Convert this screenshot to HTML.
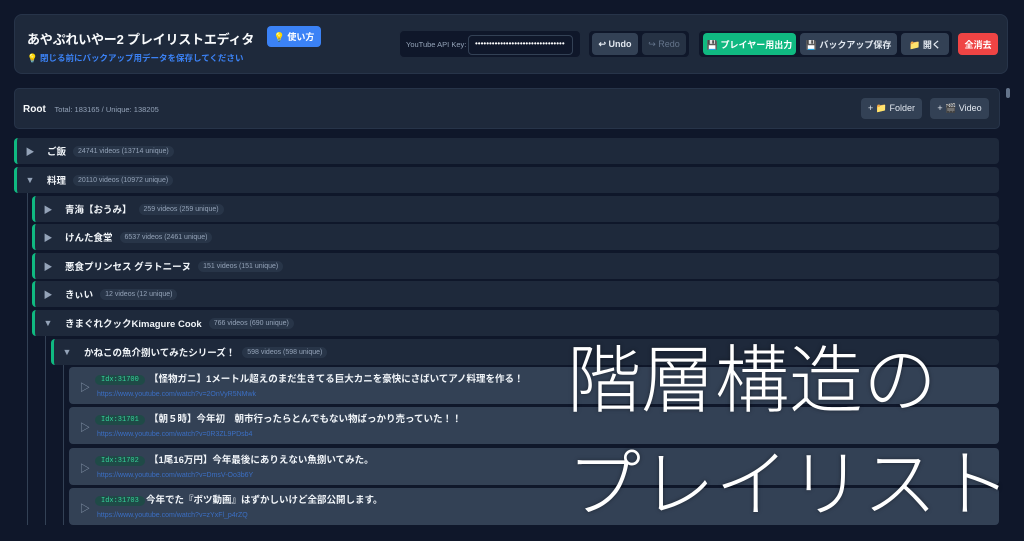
<!DOCTYPE html>
<html><head><meta charset="utf-8"><style>
*{box-sizing:border-box;margin:0;padding:0}
body{width:1024px;height:541px;overflow:hidden;background:#0f172a;font-family:"Liberation Sans","Noto Sans CJK JP",sans-serif;color:#e2e8f0;position:relative}
.abs{position:absolute}
.hdr{left:14px;top:14px;width:994px;height:60px;background:#1e293b;border-radius:8px;border:1px solid #273449}
.btn{position:absolute;border-radius:4px;font-size:9px;font-weight:bold;display:flex;align-items:center;justify-content:center;color:#e2e8f0;background:#334155}
.grp{position:absolute;background:#0f172a;border-radius:5px;border:1px solid #1e293b}
.row{position:absolute;background:#1e293b;border-radius:4px;height:26px;display:flex;align-items:center}
.row.f{border-left:3px solid #10b981}
.tri{color:#94a3b8;font-size:9px;width:18px;text-align:center;margin-left:4px}
.name{font-size:9.5px;font-weight:bold;color:#f1f5f9;margin-left:8px}
.cnt{font-size:7px;color:#94a3b8;background:#283548;border-radius:7px;padding:2px 5px;margin-left:7px}
.vid{position:absolute;left:69px;width:930px;height:37px;background:#334155;border-radius:4px}
.vid .play{position:absolute;left:11px;top:12px;color:#94a3b8;font-size:10px}
.vid .idx{position:absolute;left:26px;top:8px;font-size:7px;line-height:10px;color:#34d399;background:#1f4a47;border-radius:5px;padding:0 6px;font-family:"Liberation Mono",monospace}
.vid .t{position:absolute;top:6px;line-height:13px;font-size:9.5px;font-weight:bold;color:#f1f5f9}
.vid .u{position:absolute;left:28px;top:24px;font-size:7px;color:#3b6fc4}
.vl{position:absolute;width:1px;background:#334155}
.big{position:absolute;left:567px;font-size:74px;color:#fff;font-family:"Noto Sans CJK JP",sans-serif;font-weight:300;line-height:1;white-space:nowrap;text-shadow:0 0 4px rgba(0,0,0,.4)}
</style></head><body>
<div class="abs hdr"></div>
<div class="abs" style="left:27px;top:29px;font-size:13px;font-weight:bold;color:#f8fafc;letter-spacing:-0.2px">あやぷれいやー2 プレイリストエディタ</div>
<div class="btn" style="left:267px;top:26px;width:54px;height:21px;background:#3b82f6;color:#fff">💡 使い方</div>
<div class="abs" style="left:27px;top:52px;font-size:8.5px;color:#3b82f6;font-weight:bold">💡 閉じる前にバックアップ用データを保存してください</div>
<div class="grp" style="left:399px;top:30px;width:182px;height:28px"></div>
<div class="abs" style="left:406px;top:40px;font-size:7.5px;color:#94a3b8">YouTube API Key:</div>
<div class="abs" style="left:468px;top:35px;width:105px;height:20px;border:1px solid #334155;border-radius:4px;background:#0f172a;color:#fff;font-size:8px;padding:3px 0 0 6px;overflow:hidden;white-space:nowrap">••••••••••••••••••••••••••••••••</div>
<div class="grp" style="left:588px;top:30px;width:102px;height:28px"></div>
<div class="btn" style="left:592px;top:33px;width:46px;height:22px">↩ Undo</div>
<div class="btn" style="left:642px;top:33px;width:44px;height:22px;background:#263244;color:#64748b;font-weight:normal">↪ Redo</div>
<div class="grp" style="left:698px;top:30px;width:255px;height:28px"></div>
<div class="btn" style="left:703px;top:33px;width:93px;height:22px;background:#10b981;color:#fff">💾 プレイヤー用出力</div>
<div class="btn" style="left:800px;top:33px;width:97px;height:22px">💾 バックアップ保存</div>
<div class="btn" style="left:901px;top:33px;width:48px;height:22px">📁 開く</div>
<div class="btn" style="left:958px;top:33px;width:40px;height:22px;background:#ef4444;color:#fff">全消去</div>

<div class="abs" style="left:14px;top:88px;width:986px;height:41px;background:#1e293b;border-radius:5px;border:1px solid #273449"></div>
<div class="abs" style="left:23px;top:104px;font-size:10px;font-weight:bold;color:#f8fafc">Root <span style="font-size:7.5px;color:#94a3b8;font-weight:normal;margin-left:6px">Total: 183165 / Unique: 138205</span></div>
<div class="btn" style="left:861px;top:98px;width:61px;height:21px;font-weight:normal">+ 📁 Folder</div>
<div class="btn" style="left:930px;top:98px;width:59px;height:21px;font-weight:normal">+ 🎬 Video</div>
<div class="abs" style="left:1006px;top:88px;width:4px;height:10px;background:#64748b;border-radius:2px"></div>

<div class="vl" style="left:27px;top:193px;height:332px"></div>
<div class="vl" style="left:45px;top:336px;height:189px"></div>
<div class="vl" style="left:63px;top:365px;height:160px"></div>

<div class="row f" style="left:14px;top:138px;width:985px"><span class="tri">▶</span><span class="name">ご飯</span><span class="cnt">24741 videos (13714 unique)</span></div>
<div class="row f" style="left:14px;top:167px;width:985px"><span class="tri">▼</span><span class="name">料理</span><span class="cnt">20110 videos (10972 unique)</span></div>
<div class="row f" style="left:32px;top:196px;width:967px"><span class="tri">▶</span><span class="name">青海【おうみ】</span><span class="cnt">259 videos (259 unique)</span></div>
<div class="row f" style="left:32px;top:224px;width:967px"><span class="tri">▶</span><span class="name">けんた食堂</span><span class="cnt">6537 videos (2461 unique)</span></div>
<div class="row f" style="left:32px;top:253px;width:967px"><span class="tri">▶</span><span class="name">悪食プリンセス グラトニーヌ</span><span class="cnt">151 videos (151 unique)</span></div>
<div class="row f" style="left:32px;top:281px;width:967px"><span class="tri">▶</span><span class="name">きぃい</span><span class="cnt">12 videos (12 unique)</span></div>
<div class="row f" style="left:32px;top:310px;width:967px"><span class="tri">▼</span><span class="name">きまぐれクックKimagure Cook</span><span class="cnt">766 videos (690 unique)</span></div>
<div class="row f" style="left:51px;top:339px;width:948px"><span class="tri">▼</span><span class="name">かねこの魚介捌いてみたシリーズ！</span><span class="cnt">598 videos (598 unique)</span></div>

<div class="vid" style="top:367px"><span class="play">▷</span><span class="idx">Idx:31700</span><span class="t" style="left:80px">【怪物ガニ】1メートル超えのまだ生きてる巨大カニを豪快にさばいてアノ料理を作る！</span><span class="u">https://www.youtube.com/watch?v=2OnVyR5NMwk</span></div>
<div class="vid" style="top:407px"><span class="play">▷</span><span class="idx">Idx:31701</span><span class="t" style="left:80px">【朝５時】今年初　朝市行ったらとんでもない物ばっかり売っていた！！</span><span class="u">https://www.youtube.com/watch?v=0R3ZL9PDsb4</span></div>
<div class="vid" style="top:448px"><span class="play">▷</span><span class="idx">Idx:31702</span><span class="t" style="left:80px">【1尾16万円】今年最後にありえない魚捌いてみた。</span><span class="u">https://www.youtube.com/watch?v=DmsV-Oo3b6Y</span></div>
<div class="vid" style="top:488px"><span class="play">▷</span><span class="idx">Idx:31703</span><span class="t" style="left:77px">今年でた『ボツ動画』はずかしいけど全部公開します。</span><span class="u">https://www.youtube.com/watch?v=zYxFl_p4rZQ</span></div>

<div class="big" style="top:338px">階層構造の</div>
<div class="big" style="top:442px">プレイリスト</div>
</body></html>
